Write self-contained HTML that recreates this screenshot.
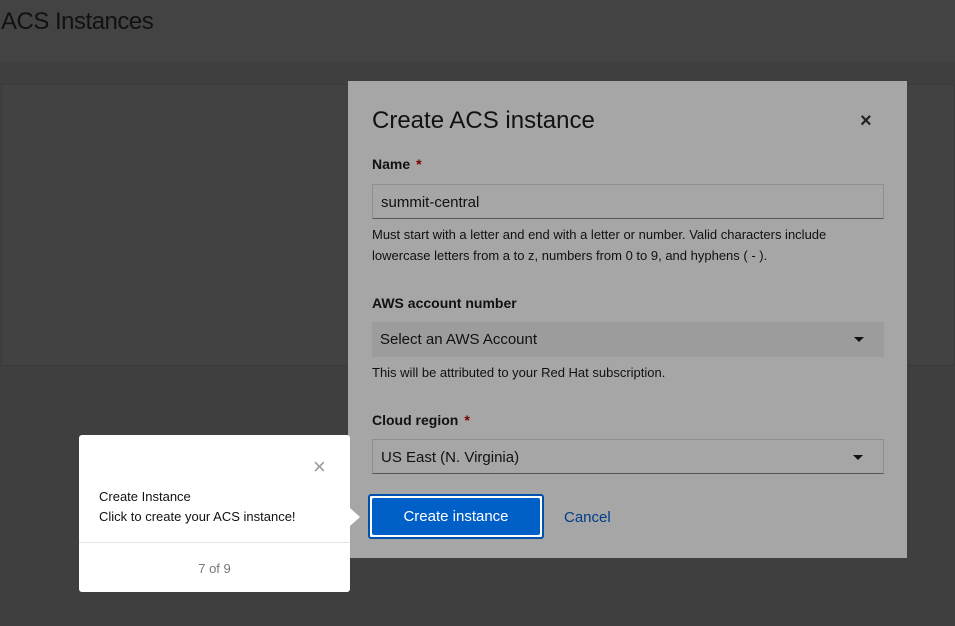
<!DOCTYPE html>
<html><head><style>
*{box-sizing:border-box;margin:0;padding:0}
body{width:955px;height:626px;overflow:hidden;background:#3f3f3f;font-family:"Liberation Sans",sans-serif;position:relative}
.hdr{position:absolute;left:0;top:0;width:955px;height:62px;background:#434343}
.hdr h1{position:absolute;left:1px;top:8px;font-size:24px;font-weight:normal;color:#111;letter-spacing:-0.5px}
.panel{position:absolute;left:1px;top:84px;width:954px;height:282px;background:#424242;border:1px solid #3a3a3a}
.modal{position:absolute;left:348px;top:81px;width:559px;height:477px;background:#a6a6a6}
.abs{position:absolute}
.lbl{font-size:14px;font-weight:bold;color:#111}
.req{color:#7a0000;margin-left:6px}
.inp{position:absolute;left:24px;width:512px;height:35px;background:#a6a6a6;border:1px solid #8e8e8e;border-bottom-color:#555;font-size:15px;color:#111;padding:9px 8px}
.sel{position:absolute;left:24px;width:512px;height:35px;background:#9c9c9c;font-size:15px;color:#111;padding:9px 8px}
.help{font-size:13px;color:#111;line-height:21px}
.caret{position:absolute;right:20px;top:15px;border-left:5px solid transparent;border-right:5px solid transparent;border-top:5px solid #111}
.btn{position:absolute;left:20px;top:413px;width:176px;height:45px;border:2px solid #0050b0;border-radius:3px;background:#fff;padding:2px}
.btn div{background:#0060c8;height:100%;border-radius:2px;color:#fff;font-size:15px;text-align:center;line-height:37px}
.tip{position:absolute;left:79px;top:435px;width:271px;height:157px;background:#fff;border-radius:3px}
</style></head><body>
<div class="hdr"><h1>ACS Instances</h1></div>
<div class="panel"></div>
<div class="modal">
 <div class="abs" style="left:24px;top:26px;font-size:24px;color:#111">Create ACS instance</div>
 <div class="abs" style="left:512px;top:29px;font-size:20px;color:#222;font-weight:bold">×</div>
 <div class="abs lbl" style="left:24px;top:75px">Name<span class="req">*</span></div>
 <div class="inp" style="top:103px">summit-central</div>
 <div class="abs help" style="left:24px;top:143px">Must start with a letter and end with a letter or number. Valid characters include<br>lowercase letters from a to z, numbers from 0 to 9, and hyphens ( - ).</div>
 <div class="abs lbl" style="left:24px;top:214px">AWS account number</div>
 <div class="sel" style="top:241px">Select an AWS Account<span class="caret"></span></div>
 <div class="abs help" style="left:24px;top:281px">This will be attributed to your Red Hat subscription.</div>
 <div class="abs lbl" style="left:24px;top:331px">Cloud region<span class="req">*</span></div>
 <div class="inp" style="top:358px">US East (N. Virginia)<span class="caret"></span></div>
 <div class="btn"><div>Create instance</div></div>
 <div class="abs" style="left:216px;top:428px;font-size:15px;color:#003c8a">Cancel</div>
</div>
<div class="tip">
 <div class="abs" style="left:234px;top:21px;font-size:22px;color:#999;line-height:22px">×</div>
 <div class="abs" style="left:20px;top:52px;font-size:13px;color:#111;line-height:20px">Create Instance<br>Click to create your ACS instance!</div>
 <div class="abs" style="left:0;top:107px;width:271px;height:1px;background:#e5e5e5"></div>
 <div class="abs" style="left:0;top:126px;width:271px;text-align:center;font-size:13px;color:#777">7 of 9</div>
 <div class="abs" style="left:271px;top:73px;border-top:9px solid transparent;border-bottom:9px solid transparent;border-left:10px solid #fff"></div>
</div>
</body></html>
